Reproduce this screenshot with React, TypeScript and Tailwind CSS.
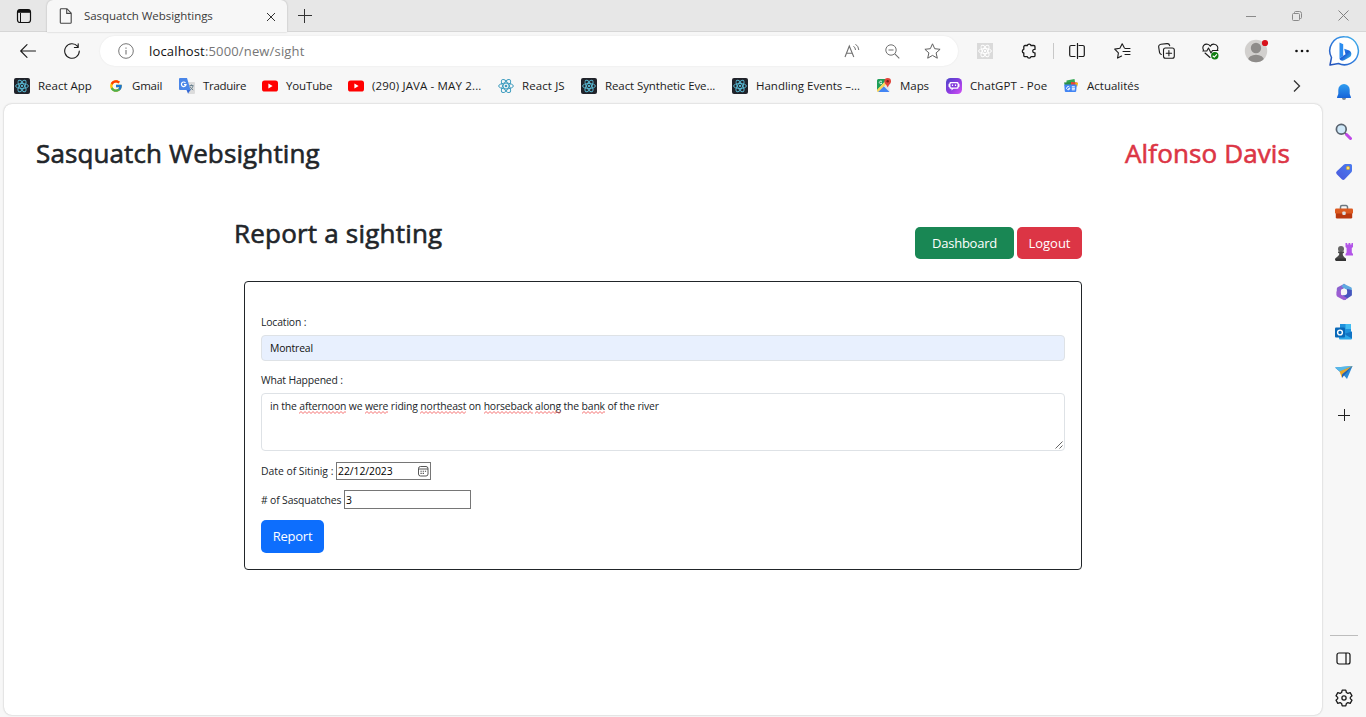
import React from "react";
import { FcGoogle } from "react-icons/fc";

function ReactLogo({ color, size, sw = 1.5 }: { color: string; size: number; sw?: number }) {
  return (
    <svg width={size} height={size} viewBox="0 0 24 24" fill="none" stroke={color} strokeWidth={sw}>
      <ellipse cx="12" cy="12" rx="11" ry="4.3" />
      <ellipse cx="12" cy="12" rx="11" ry="4.3" transform="rotate(60 12 12)" />
      <ellipse cx="12" cy="12" rx="11" ry="4.3" transform="rotate(120 12 12)" />
      <circle cx="12" cy="12" r="2" fill={color} stroke="none" />
    </svg>
  );
}

function DarkReact() {
  return (
    <span className="flex size-4 items-center justify-center rounded-[2px] bg-[#20232a]">
      <ReactLogo color="#58b9d3" size={14} sw={1.6} />
    </span>
  );
}

function YouTube() {
  return (
    <svg width="16" height="16" viewBox="0 0 16 16">
      <rect x="0" y="2.4" width="16" height="11.2" rx="2.6" fill="#f00" />
      <path d="M6.4 5.6v4.8L10.6 8z" fill="#fff" />
    </svg>
  );
}

function Translate() {
  return (
    <svg width="16" height="16" viewBox="0 0 16 16">
      <path d="M6 4h9a1 1 0 0 1 1 1v10a1 1 0 0 1-1 1H9z" fill="#dcdcdc" />
      <path d="M10.5 7.5h4M12.5 6.5v1M14 8c-.5 2-1.6 3-3 4M11 8.5c.6 1.500 1.800 2.700 3.200 3.500" stroke="#607988" strokeWidth=".9" fill="none" />
      <path d="M1 0h7l3.500 12H1a1 1 0 0 1-1-1V1a1 1 0 0 1 1-1z" fill="#4a86e8" />
      <path d="M7.500 12h4L9 15.500z" fill="#3367d6" />
      <path d="M6.500 4.800A2.300 2.300 0 1 0 7 6.700H5" stroke="#fff" strokeWidth="1.200" fill="none" />
    </svg>
  );
}

function Maps() {
  return (
    <svg width="16" height="16" viewBox="0 0 16 16">
      <rect x="1" y="1" width="12.500" height="13" rx="1.500" fill="#e3e5e8" />
      <path d="M2.500 1H11L1 12.500V2.500A1.500 1.500 0 0 1 2.500 1z" fill="#1e9e58" />
      <path d="M7.500 8L13.500 14H1.800z" fill="#4285f4" />
      <path d="M11 1.500L1 11.800v1.400l1 .8L13 3.500z" fill="#fbd75b" />
      <path d="M6 3.700A1.400 1.400 0 1 0 6 5.200H4.800" stroke="#fff" strokeWidth=".8" fill="none" />
      <path d="M11.700 0a3.300 3.300 0 0 1 3.300 3.400c0 2.300-2.500 3.200-3.300 6.200-.8-3-3.300-3.900-3.300-6.200A3.300 3.300 0 0 1 11.700 0z" fill="#e0443a" />
      <circle cx="11.700" cy="3.300" r="1.200" fill="#7d2018" />
    </svg>
  );
}

function Poe() {
  return (
    <svg width="16" height="16" viewBox="0 0 16 16">
      <defs>
        <linearGradient id="poe" x1="0" y1="0" x2="1" y2="1">
          <stop offset="0" stopColor="#4a46c8" />
          <stop offset=".5" stopColor="#8a3be0" />
          <stop offset="1" stopColor="#d552f5" />
        </linearGradient>
      </defs>
      <rect width="16" height="16" rx="4.500" fill="url(#poe)" />
      <path d="M4.500 4h7a1 1 0 0 1 1 1v.6a1 1 0 0 1 1 1v1.600a1 1 0 0 1-1 1v.6a1 1 0 0 1-1 1H7.500L5.500 12.500v-1.700h-1a1 1 0 0 1-1-1v-.6a1 1 0 0 1-1-1V6.600a1 1 0 0 1 1-1V5a1 1 0 0 1 1-1z" fill="#fff" />
      <rect x="4.500" y="5.300" width="7" height="4.200" rx="1" fill="#8238dc" />
      <path d="M6.500 6.500v1.600M9.500 6.500v1.600" stroke="#fff" strokeWidth="1.200" />
    </svg>
  );
}

function News() {
  return (
    <svg width="16" height="16" viewBox="0 0 16 16">
      <path d="M3.500 2.500l8-1.500 1 6h-9z" fill="#34a853" />
      <path d="M1 4.500l7.500-.5.500 4H2z" fill="#2b8f47" />
      <path d="M8 4l6.500.5L14 8H8z" fill="#ea4335" />
      <path d="M12.500 4.500l2.500.5-.8 3.500H12z" fill="#fbbc04" />
      <path d="M1.200 6.500h12.600l-.6 6.700a1 1 0 0 1-1 .8H2.800a1 1 0 0 1-1-.8z" fill="#4285f4" />
      <path d="M6.500 9.200A1.600 1.600 0 1 0 6.800 10.500H5.300M8.800 8.800h3M8.800 10.300h3.200M8.800 11.800h3" stroke="#fff" strokeWidth="1" fill="none" />
    </svg>
  );
}

const line = { fill: "none", stroke: "#1b1b1b", strokeWidth: 1.1, strokeLinecap: "round" as const, strokeLinejoin: "round" as const };

function Slot({ w, children }: { w: string; children: React.ReactNode }) {
  return <div className={`flex shrink-0 items-center justify-center ${w}`}>{children}</div>;
}

function TitleBar() {
  return (
    <div className="flex h-8 shrink-0 items-stretch bg-[#e7e7e7] text-[#3b3b3b]">
      <div className="flex w-[47px] items-center border-b border-[#d6d6d6] pl-4">
        <svg width="16" height="16" viewBox="0 0 16 16" fill="none" stroke="#111">
          <rect x="1.500" y="1.500" width="13" height="13" rx="2.500" strokeWidth="1.200" />
          <path d="M2 3.300h12" strokeWidth="3" />
          <path d="M4.500 5v9" strokeWidth="1" />
        </svg>
      </div>
      <div className="flex w-60 items-center rounded-t-[6px] bg-[#f7f7f7] pl-3 shadow-[0_0_2px_rgba(0,0,0,0.25)]">
        <svg width="14" height="16" viewBox="0 0 14 16" fill="none" stroke="#444" strokeWidth="1.100" strokeLinejoin="round">
          <path d="M2.200.7h5.600l4.400 4.500v9.200a.9.900 0 0 1-.9.900H2.200a.9.900 0 0 1-.9-.9V1.600a.9.900 0 0 1 .9-.9z" />
          <path d="M7.700.9v4.500h4.300" />
        </svg>
        <span className="ml-[11px] w-[178px] whitespace-nowrap text-[11.500px] tracking-[-0.050px]">Sasquatch Websightings</span>
        <svg width="10" height="10" viewBox="0 0 10 10" stroke="#333" strokeWidth="1" className="ml-1 mt-px">
          <path d="M1 1l8 8M9 1L1 9" />
        </svg>
      </div>
      <div className="flex flex-1 items-center border-b border-[#d6d6d6] pl-[11px]">
        <svg width="14" height="14" viewBox="0 0 14 14" stroke="#333" strokeWidth="1">
          <path d="M0 6.500h14M6.500 0v14" />
        </svg>
        <div className="flex-1" />
        <Slot w="w-[46px]">
          <svg width="10" height="10" viewBox="0 0 10 10" stroke="#8a8a8a"><path d="M0 5.500h10" /></svg>
        </Slot>
        <Slot w="w-[46px]">
          <svg width="10" height="10" viewBox="0 0 10 10" stroke="#8a8a8a" fill="none">
            <rect x=".5" y="2.500" width="7" height="7" rx="1" />
            <path d="M2.500 2V1.500a1 1 0 0 1 1-1h4a2 2 0 0 1 2 2v4a1 1 0 0 1-1 1H8" />
          </svg>
        </Slot>
        <Slot w="w-[46px]">
          <svg width="11" height="11" viewBox="0 0 11 11" stroke="#808080"><path d="M.5.500l10 10M10.500.500l-10 10" /></svg>
        </Slot>
      </div>
    </div>
  );
}

function Toolbar() {
  return (
    <div className="flex h-[38px] shrink-0 items-center">
      <Slot w="w-[56px]">
        <svg width="16" height="14" viewBox="0 0 16 14" {...line}><path d="M15.500 7H.8M7 .7L.7 7 7 13.300" /></svg>
      </Slot>
      <Slot w="w-[32px]">
        <svg width="16" height="16" viewBox="0 0 16 16" {...line}>
          <path d="M15.300 8A7.300 7.300 0 1 1 13.600 3.300M14.200.7v3.800h-3.800" />
        </svg>
      </Slot>
      <div className="ml-3 flex h-[30px] w-[858px] items-center rounded-full bg-white pl-[18px] pr-[6px] shadow-[0_0_2px_rgba(0,0,0,0.08)]">
        <svg width="16" height="16" viewBox="0 0 16 16" fill="none" stroke="#767676">
          <circle cx="8" cy="8" r="7.300" />
          <path d="M8 7v4.500M8 4.500v1.200" strokeWidth="1.100" />
        </svg>
        <span className="ml-[15px] mt-[2px] whitespace-nowrap text-[13px] tracking-[0.160px] text-[#767676]"><span className="text-[#111]">localhost</span>:5000/new/sight</span>
        <div className="flex-1" />
        <Slot w="w-10">
          <svg width="16" height="16" viewBox="0 0 16 16" fill="none" stroke="#707070">
            <path d="M1 14L5.300 3 9.800 14M2.500 10.300h5.800" strokeWidth="1.100" />
            <path d="M9.500 3.200a5 5 0 0 1 2 3.800M11.500 1.200A7.500 7.500 0 0 1 14.800 7" />
          </svg>
        </Slot>
        <Slot w="w-10">
          <svg width="15" height="15" viewBox="0 0 15 15" fill="none" stroke="#707070">
            <circle cx="6" cy="6" r="5.200" />
            <path d="M3.500 6h5M9.800 9.800l4.500 4.500" strokeWidth="1.100" />
          </svg>
        </Slot>
        <Slot w="w-10">
          <svg width="17" height="16" viewBox="0 0 17 16" fill="none" stroke="#606060" strokeLinejoin="round">
            <path d="M8.500.8l2.200 4.900 5.400.6-4 3.600 1.200 5.300-4.800-2.800-4.800 2.800 1.200-5.300-4-3.600 5.400-.6z" />
          </svg>
        </Slot>
      </div>
      <Slot w="ml-[5px] w-11">
        <span className="flex size-4 items-center justify-center bg-[#dadada]"><ReactLogo color="#fff" size={14} sw={1.6} /></span>
      </Slot>
      <Slot w="w-11">
        <svg width="16" height="16" viewBox="0 0 16 16" {...line} strokeWidth={1.3}>
          <path d="M4 2.500h2.300a1.900 1.900 0 0 1 3.700 0h2.800a1.200 1.200 0 0 1 1.200 1.200v2.700h-.6a1.700 1.700 0 0 0 0 3.400h.6v2.700a1.200 1.200 0 0 1-1.200 1.200H10a1.900 1.900 0 0 1-3.700 0H4a1.200 1.200 0 0 1-1.200-1.200V10a1.900 1.900 0 0 1 0-3.700V3.700A1.200 1.200 0 0 1 4 2.500z" />
        </svg>
      </Slot>
      <div className="mr-px h-4 w-[3px] shrink-0 border-r border-[#c8c8c8]" />
      <Slot w="w-11">
        <svg width="16" height="16" viewBox="0 0 16 16" {...line} strokeWidth={1.2}>
          <path d="M6 2.500H2.200A1.500 1.500 0 0 0 .7 4v8a1.500 1.500 0 0 0 1.500 1.500H6M10 2.500h3.800A1.500 1.500 0 0 1 15.300 4v8a1.500 1.500 0 0 1-1.500 1.500H10M8.500.5v15" />
        </svg>
      </Slot>
      <Slot w="ml-px w-11">
        <svg width="17" height="16" viewBox="0 0 17 16" {...line}>
          <path d="M10.300 4.800L8.200.8 5.900 5.300l-5.200.8 3.700 3.700-.8 5.300 4-2M11 5.500h5M9 8.500h7M11 11.500h5" />
        </svg>
      </Slot>
      <Slot w="w-11">
        <svg width="17" height="16" viewBox="0 0 17 16" {...line}>
          <rect x="5.500" y="5" width="10.800" height="10.300" rx="2" />
          <path d="M10.900 7.500v5.300M8.200 10.200h5.400M3.300 11.500A3 3 0 0 1 1.500 9.300L.7 4.200A2.600 2.600 0 0 1 2.900 1.200L9 .6a2.500 2.500 0 0 1 2.700 2" />
        </svg>
      </Slot>
      <Slot w="w-11">
        <svg width="17" height="17" viewBox="0 0 17 17" {...line}>
          <path d="M1.500 7C-.5 3 2.800.7 5.500 1.200 7 1.500 7.800 2.500 8.300 3.300 9 2 10.500 1 12.200 1.200c3 .3 4.400 3 3.100 5.800M3 10l5 4.500M.8 8h4l1.700-3L9 10l1.500-2.500h5.500" />
          <circle cx="12.800" cy="12.800" r="3.700" fill="#107c10" stroke="none" />
          <path d="M11 13l1.300 1.200 2.300-2.500" stroke="#fff" />
        </svg>
      </Slot>
      <Slot w="w-12">
        <svg width="24" height="24" viewBox="0 0 24 24" overflow="visible">
          <defs><clipPath id="avatar"><circle cx="12" cy="12" r="11.200" /></clipPath></defs>
          <circle cx="12" cy="12" r="11.200" fill="#d2d0ce" />
          <g clipPath="url(#avatar)" fill="#8e8c8a"><circle cx="12" cy="9" r="5.200" /><ellipse cx="12" cy="21" rx="8" ry="5.200" /></g>
          <circle cx="21" cy="4" r="3.100" fill="#d8111b" />
        </svg>
      </Slot>
      <Slot w="w-[42px]">
        <svg width="14" height="4" viewBox="0 0 14 4" fill="#111" className="ml-px"><circle cx="1.500" cy="2" r="1.300" /><circle cx="7" cy="2" r="1.300" /><circle cx="12.500" cy="2" r="1.300" /></svg>
      </Slot>
    </div>
  );
}

function Bookmark({ w, icon, label }: { w: string; icon: React.ReactNode; label: string }) {
  return (
    <div className={`flex shrink-0 items-center gap-2 whitespace-nowrap ${w}`}>
      <span className="flex size-4 shrink-0 items-center justify-center">{icon}</span>
      {label}
    </div>
  );
}

function Bookmarks() {
  return (
    <div className="mb-[2px] flex h-[31px] shrink-0 items-center pl-[14px] text-[11.500px] text-[#1b1b1b]">
      <Bookmark w="w-[94px] tracking-[0px]" icon={<DarkReact />} label="React App" />
      <Bookmark w="w-[71px] tracking-[-0.200px]" icon={<FcGoogle size={14} />} label="Gmail" />
      <Bookmark w="w-[83px] tracking-[-0.300px]" icon={<Translate />} label="Traduire" />
      <Bookmark w="w-[86px] tracking-[-0.150px]" icon={<YouTube />} label="YouTube" />
      <Bookmark w="w-[150px] tracking-[0.150px]" icon={<YouTube />} label="(290) JAVA - MAY 2..." />
      <Bookmark w="w-[83px] tracking-[0.100px]" icon={<ReactLogo color="#3f9dbf" size={16} sw={1.5} />} label="React JS" />
      <Bookmark w="w-[151px] tracking-[-0.100px]" icon={<DarkReact />} label="React Synthetic Eve..." />
      <Bookmark w="w-[144px] tracking-[0px]" icon={<DarkReact />} label="Handling Events –..." />
      <Bookmark w="w-[70px] tracking-[-0.050px]" icon={<Maps />} label="Maps" />
      <Bookmark w="w-[117px] tracking-[0.080px]" icon={<Poe />} label="ChatGPT - Poe" />
      <Bookmark w="w-[200px] tracking-[0px]" icon={<News />} label="Actualités" />
      <svg width="8" height="12" viewBox="0 0 8 12" fill="none" stroke="#333" strokeWidth="1.300" className="ml-[30px]"><path d="M1 .5L6.500 6 1 11.500" /></svg>
    </div>
  );
}

function Misspelt({ children }: { children: string }) {
  return (
    <span className="relative inline-block">
      {children}
      <svg className="absolute bottom-0 left-0 h-[3px] w-full">
        <defs>
          <pattern id="squiggle" width="4" height="3" patternUnits="userSpaceOnUse">
            <path d="M-1 1.500L0 2.500 2 .5 4 2.500 5 1.500" fill="none" stroke="#f45c5c" strokeWidth=".9" />
          </pattern>
        </defs>
        <rect width="100%" height="3" fill="url(#squiggle)" />
      </svg>
    </span>
  );
}

function Page() {
  return (
    <main className="ml-1 flex h-[611px] flex-col rounded-lg bg-white text-[10.400px] leading-4 text-[#212529] shadow-[0_0_2px_rgba(0,0,0,0.28)]">
      <header className="flex justify-between pl-8 pr-8 pt-[33px] text-[26px] leading-8 tracking-[0.120px] [-webkit-text-stroke:0.6px]">
        <h1 className="whitespace-nowrap">Sasquatch Websighting</h1>
        <h1 className="whitespace-nowrap text-[#dc3545]">Alfonso Davis</h1>
      </header>
      <section className="ml-[230px] w-[848px] pt-12">
        <div className="flex h-[46px] justify-between">
          <h2 className="whitespace-nowrap text-[26px] leading-8 tracking-[0.200px] [-webkit-text-stroke:0.6px]">Report a sighting</h2>
          <div className="flex gap-[3px] pt-[10px] text-[13px] tracking-[-0.250px] text-white">
            <button className="h-8 w-[99px] rounded-[5px] bg-[#198754]">Dashboard</button>
            <button className="h-8 w-[65px] rounded-[5px] bg-[#dc3545] tracking-[-0.050px]">Logout</button>
          </div>
        </div>
        <form className="ml-[10px] mt-[18px] flex h-[289px] flex-col items-start rounded-[4px] border border-[#212529] px-4 pt-8 tracking-[-0.150px]">
          <label>Location :</label>
          <div className="mt-[5px] flex h-[26px] w-full items-center rounded-[4px] border border-[#dee2e6] bg-[#e8f0fe] pl-2 text-[#111]">Montreal</div>
          <label className="mt-[11px]">What Happened :</label>
          <div className="relative mt-[5px] h-[58px] w-full rounded-[4px] border border-[#dee2e6] pl-2 pt-1">
            <p className="whitespace-nowrap">
              in the <Misspelt>afternoon</Misspelt> we <Misspelt>were</Misspelt> riding <Misspelt>northeast</Misspelt> on <Misspelt>horseback</Misspelt> <Misspelt>along</Misspelt> the <Misspelt>bank</Misspelt> of the river
            </p>
            <svg className="absolute bottom-px right-px" width="8" height="8" viewBox="0 0 8 8" stroke="#555" strokeWidth=".9"><path d="M.5 7.500l7-7M4.500 7.500l3-3" /></svg>
          </div>
          <div className="mt-[11px] flex h-[18px] items-center">
            <label className="w-[75px] whitespace-nowrap tracking-[-0.020px]">Date of Sitinig :</label>
            <div className="flex h-[18px] w-[95px] items-center justify-between border border-[#767676] pl-px pr-px tracking-[-0.050px] text-black">
              22/12/2023
              <svg width="11" height="11" viewBox="0 0 11 11" fill="none" stroke="#444" strokeWidth=".9">
                <rect x=".5" y=".5" width="9.500" height="9.500" rx="2" />
                <path d="M.5 3h9.500" />
                <path d="M2.500 5.300h1.200M4.700 5.300h1.200M6.900 5.300h1.200M2.500 7.400h1.200M4.700 7.400h1.200" strokeWidth="1.100" />
              </svg>
            </div>
          </div>
          <div className="mt-[10px] flex h-[19px] items-center">
            <label className="w-[83px] whitespace-nowrap"># of Sasquatches</label>
            <div className="flex h-[19px] w-[127px] items-center border border-[#767676] pl-px text-black">3</div>
          </div>
          <button className="mt-[11px] h-[33px] w-[63px] rounded-[5px] bg-[#0d6efd] pb-[2px] text-[13px] tracking-[-0.250px] text-white">Report</button>
        </form>
      </section>
    </main>
  );
}

function SideBar() {
  return (
    <aside className="flex w-[44px] shrink-0 flex-col items-center pr-px">
      <svg className="mt-[3px]" width="32" height="32" viewBox="0 0 32 32">
        <defs>
          <linearGradient id="ring" x1="0" y1="1" x2="1" y2="0"><stop stopColor="#2450b8" /><stop offset=".5" stopColor="#2f7fe0" /><stop offset="1" stopColor="#43b5ea" /></linearGradient>
          <linearGradient id="b" x1="0" y1="0" x2="1" y2="1"><stop stopColor="#2b9bf0" /><stop offset=".5" stopColor="#1d62d8" /><stop offset="1" stopColor="#45d0ea" /></linearGradient>
        </defs>
        <path d="M16.500 1.800a14 14 0 1 1-6 26.700L2 30l1.500-7.500A14 14 0 0 1 16.500 1.800z" fill="#fff" stroke="url(#ring)" strokeWidth="1.500" strokeLinejoin="round" />
        <path d="M11.500 7.500l3.700 1.800v11.500l-3.700 2.500z" fill="#2b8df0" />
        <path d="M11.500 23.300l6-4-1.300-5.600 5 1.800c3 1.500 2.600 5.300.6 6.600l-5.600 3.100c-2 1-4.700.2-4.700-1.900z" fill="url(#b)" />
      </svg>
      <Slot w="h-[49px]">
        <svg width="16" height="18" viewBox="0 0 16 18">
          <defs><linearGradient id="bell" x1="0" y1="0" x2="0" y2="1"><stop stopColor="#2f9df0" /><stop offset="1" stopColor="#1764d8" /></linearGradient></defs>
          <path d="M6 15h4a2 2 0 0 1-4 0z" fill="#7b8691" />
          <path d="M8 1a5.700 5.700 0 0 1 5.700 5.700V11l1.300 3.200a.6.600 0 0 1-.6.800H1.600a.6.600 0 0 1-.6-.8L2.300 11V6.700A5.700 5.700 0 0 1 8 1z" fill="url(#bell)" />
        </svg>
      </Slot>
      <Slot w="h-[30px]">
        <svg width="17" height="17" viewBox="0 0 17 17">
          <path d="M10 10l5.500 5.500" stroke="#555" strokeWidth="1.800" />
          <path d="M11.500 11.500l4 4" stroke="#c048e8" strokeWidth="3" strokeLinecap="round" />
          <circle cx="6.300" cy="6.300" r="4.900" fill="#cfe8f8" stroke="#5a6470" strokeWidth="1.700" />
        </svg>
      </Slot>
      <Slot w="mt-[3px] h-[46px]">
        <svg width="18" height="18" viewBox="0 0 18 18">
          <defs><linearGradient id="tag" x1="1" y1="0" x2="0" y2="1"><stop stopColor="#4b7cf0" /><stop offset="1" stopColor="#4a58dc" /></linearGradient></defs>
          <path d="M10.500 1h5A1.500 1.500 0 0 1 17 2.500v5.300a2 2 0 0 1-.6 1.400l-6.700 7a2 2 0 0 1-2.900 0l-5-5a2 2 0 0 1 0-2.900l7.200-6.700A2 2 0 0 1 10.500 1z" fill="url(#tag)" />
          <circle cx="13" cy="5" r="1.700" fill="#f9df72" stroke="#d6a62a" strokeWidth=".7" />
        </svg>
      </Slot>
      <Slot w="h-[34px]">
        <svg width="18" height="16" viewBox="0 0 18 16">
          <path d="M5.500 5V3a1.500 1.500 0 0 1 1.500-1.500h4A1.500 1.500 0 0 1 12.500 3v2" fill="none" stroke="#6d7880" strokeWidth="1.500" />
          <rect x=".8" y="8" width="16.400" height="6.500" rx="1.200" fill="#b9380f" />
          <rect x="0" y="4.500" width="18" height="5" rx="1.200" fill="#dc5a20" />
          <rect x="7.300" y="7.500" width="3.400" height="3.500" rx="1" fill="#dde0e2" />
        </svg>
      </Slot>
      <Slot w="h-[46px]">
        <svg width="18" height="18" viewBox="0 0 18 18">
          <path d="M10.500 0h1.700v1.500h1.300V0h1.800v1.500h1.200V0H18v4l-1.200 1v4.500l1.200 1.500v1.500h-7.500V11l1.100-1.500V5l-1.100-1z" fill="#b355e8" />
          <circle cx="6" cy="6" r="3" fill="#666" />
          <path d="M3 8.500h6v1.200L7.700 10.500c0 2 .8 3 2.300 4.200.7.600 1 1.200 1 2.300H0c0-1.100.3-1.700 1-2.300 1.500-1.200 3.300-2.200 3.300-4.200L3 9.700z" fill="#484848" />
          <path d="M.5 15.500h10.500V18H.5z" fill="#333" />
        </svg>
      </Slot>
      <Slot w="h-[34px]">
        <svg width="18" height="18" viewBox="0 0 18 18">
          <path d="M9.500.8L3 4a2 2 0 0 0-1.200 1.800V12L6 13V7l6-3.500z" fill="#8c62cf" />
          <path d="M8.500.8L16 4.300a1.500 1.500 0 0 1 .8 1.300V12l-5-1V7L6.500 3.500z" fill="#5faae0" />
          <path d="M16.800 7v5.500L10 17l-4-3.500 6-3.500V6z" fill="#4755bd" />
          <path d="M1.500 8.500V12a2 2 0 0 0 1 1.700L9 17.300l3.500-2L6 11.500V7z" fill="#9c5ed2" />
          <circle cx="9" cy="9" r="3.200" fill="#f7f7f7" />
        </svg>
      </Slot>
      <Slot w="h-[46px]">
        <svg width="18" height="18" viewBox="0 0 18 18">
          <path d="M5 1h11v10H5z" fill="#1f91dc" />
          <path d="M10.500 1H16v5h-5.500z" fill="#42bdf2" />
          <path d="M4 8l7 4 6-3.500v7a1 1 0 0 1-1 1H5a1 1 0 0 1-1-1z" fill="#2ba7ea" />
          <path d="M17 8.500v7L9 11z" fill="#1173c4" />
          <rect x="0" y="4.500" width="10" height="10" rx="1" fill="#0868b8" />
          <circle cx="5" cy="9.500" r="2.400" fill="none" stroke="#fff" strokeWidth="1.400" />
        </svg>
      </Slot>
      <Slot w="h-[34px]">
        <svg width="18" height="15" viewBox="0 0 18 15">
          <path d="M0 2.500L17.500 1 12 14 9 10.500z" fill="#2a8bd8" />
          <path d="M0 2.500L17.500 1 5 6.500z" fill="#58b9e8" />
          <path d="M4.500 6.500L17.500 1 7 9.500V13z" fill="#e7a72c" />
          <path d="M7 9.500L17.500 1 9 10.500 7 13z" fill="#245fae" />
        </svg>
      </Slot>
      <Slot w="mt-4 h-[20px]">
        <svg width="12" height="12" viewBox="0 0 12 12" stroke="#222"><path d="M0 6.500h12M6.500 0v12" /></svg>
      </Slot>
      <div className="mt-auto h-px w-7 bg-[#bdbdbd]" />
      <Slot w="mt-3 h-5">
        <svg width="15" height="13" viewBox="0 0 15 13" fill="none" stroke="#111" strokeWidth="1.200"><rect x="1" y="1" width="13" height="11" rx="2" /><path d="M10 1v11" /></svg>
      </Slot>
      <Slot w="mb-[9px] mt-5 h-5">
        <svg width="18" height="18" viewBox="0 0 18 18" {...line} strokeWidth={1.3}>
          <path d="M7.200 1.200h3.600l.6 2.300 1.500.9 2.300-.7 1.800 3.100-1.700 1.600v1.200l1.700 1.600-1.800 3.100-2.300-.7-1.500.9-.6 2.300H7.200l-.6-2.300-1.500-.9-2.300.7L1 11.200l1.700-1.600V8.400L1 6.800l1.800-3.100 2.300.7 1.500-.9z" />
          <circle cx="9" cy="9" r="2.100" />
        </svg>
      </Slot>
    </aside>
  );
}

export default function App() {
  return (
    <div className="flex h-[717px] w-[1366px] flex-col overflow-hidden bg-[#f7f7f7] font-['Open_Sans','Noto_Sans',sans-serif]">
      <TitleBar />
      <div className="flex min-h-0 flex-1">
        <div className="flex w-[1322px] shrink-0 flex-col">
          <Toolbar />
          <Bookmarks />
          <div className="pt-px"><Page /></div>
        </div>
        <SideBar />
      </div>
    </div>
  );
}
